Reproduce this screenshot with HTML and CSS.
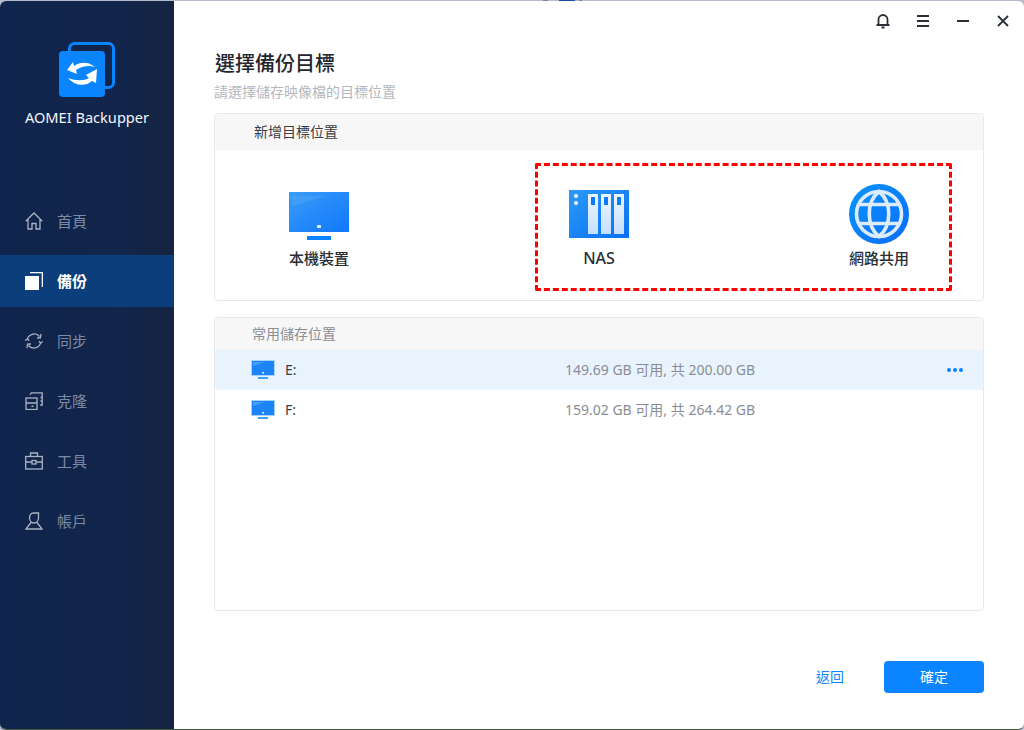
FILE: index.html
```html
<!DOCTYPE html>
<html lang="zh-Hant">
<head>
<meta charset="utf-8">
<title>AOMEI Backupper</title>
<link rel="stylesheet" href="styles.css">
</head>
<body>
<div class="window">
  <aside class="sidebar">
    <div class="brand">
      <svg class="logo" width="60" height="60" viewBox="0 0 60 60">
        <rect x="13.500" y="3.500" width="44" height="44" rx="5" fill="none" stroke="#0a84ff" stroke-width="3"/>
        <rect x="3" y="11" width="46" height="46" rx="4" fill="#0a84ff"/>
        <path d="M11 30 L17 22 L18 26 C25 21 33 22 39 27 C33 25 26 26 20 30 L21 34 Z" fill="#fff"/>
        <path d="M41 29 L40 43 L36 41 C29 47 19 46 12 38 C20 41 28 41 33 38 L30 35 Z" fill="#fff"/>
      </svg>
      <div class="brand-name">AOMEI Backupper</div>
    </div>
    <nav class="nav">
      <a class="nav-item">
        <svg class="nav-icon" viewBox="0 0 18 18"><path d="M.7 9.200 9 1l8.300 8.200M3 7.500V17h4v-5.500h4V17h4V7.500"/></svg>
        <span>首頁</span>
      </a>
      <a class="nav-item active">
        <svg class="nav-icon" viewBox="0 0 18 18"><rect x="0" y="4" width="14" height="14" fill="#fff" stroke="none"/><path d="M5 .6h12.400V15" stroke="#fff" stroke-width="1.400"/></svg>
        <span>備份</span>
      </a>
      <a class="nav-item">
        <svg class="nav-icon" viewBox="0 0 18 18"><path d="M2.200 8A7 7 0 0 1 14.500 4.500M15.800 10A7 7 0 0 1 3.500 13.500M12 6l3.400-.2L16 1.800M6 12l-3.400.2L2 16.200M.3 8.500l2-1.600 1.800 1.800M17.700 9.500l-2 1.600-1.800-1.800"/></svg>
        <span>同步</span>
      </a>
      <a class="nav-item">
        <svg class="nav-icon" viewBox="0 0 18 18"><rect x="1" y="6" width="11" height="11.500"/><path d="M1 11h11M5 2.500 6.500.8H17.200V13h-2M15.500 5.500h2M15.500 9h2"/><rect x="6.500" y="13.500" width="2" height="1.500" fill="#aab3c4" stroke="none"/></svg>
        <span>克隆</span>
      </a>
      <a class="nav-item">
        <svg class="nav-icon" viewBox="0 0 18 18"><rect x=".7" y="4.500" width="16.600" height="12.500"/><path d="M5.500 4.500V1h7v3.500M.7 10h6M11.300 10h6"/><rect x="7" y="8.500" width="4" height="3.500"/></svg>
        <span>工具</span>
      </a>
      <a class="nav-item">
        <svg class="nav-icon" viewBox="0 0 18 18"><path d="M13.500 1H8.500C5.500 1 4.500 3.500 4.500 6c0 3 2 5 4.500 5s4.500-2 4.500-5zM6 10.500 1 17h16l-5-6.500"/></svg>
        <span>帳戶</span>
      </a>
    </nav>
  </aside>

  <main class="main">
    <header class="topbar">
      <span class="top-btn"><svg viewBox="0 0 16 16" width="16" height="16"><path d="M3.500 12V6.500a4.500 4.500 0 0 1 9 0V12M1.500 12h13M6.500 14.500h3"/></svg></span>
      <span class="top-btn"><svg viewBox="0 0 16 16" width="16" height="16"><path d="M2 3h12M2 8h12M2 13h12"/></svg></span>
      <span class="top-btn"><svg viewBox="0 0 16 16" width="16" height="16"><path d="M2 8h12"/></svg></span>
      <span class="top-btn"><svg viewBox="0 0 16 16" width="16" height="16"><path d="M3 3l10 10M13 3 3 13"/></svg></span>
    </header>

    <div class="content">
      <h1 class="title">選擇備份目標</h1>
      <p class="subtitle">請選擇儲存映像檔的目標位置</p>

      <section class="card add-card">
        <div class="card-head head-dark">新增目標位置</div>
        <div class="targets">
          <div class="target">
            <svg width="60" height="60" viewBox="0 0 60 60">
              <defs><linearGradient id="scr" x1="0" y1="0" x2="1" y2="1"><stop offset="0" stop-color="#3a9cf8"/><stop offset="1" stop-color="#0f78fb"/></linearGradient></defs>
              <rect x="0" y="8" width="60" height="40" fill="url(#scr)"/>
              <path d="M3 12h34L3 22z" fill="#5db0f7" opacity=".35"/>
              <rect x="28" y="41" width="4" height="3" rx="1" fill="#e8f3ff"/>
              <rect x="18" y="52" width="24" height="4" fill="#0a84ff"/>
            </svg>
            <div class="target-name">本機裝置</div>
          </div>
          <div class="target">
            <svg width="60" height="60" viewBox="0 0 60 60">
              <defs>
                <linearGradient id="nas" x1="0" y1="0" x2="1" y2="1"><stop offset="0" stop-color="#2a9af8"/><stop offset="1" stop-color="#0a70f5"/></linearGradient>
                <linearGradient id="bay" x1="0" y1="0" x2="0" y2="1"><stop offset="0" stop-color="#eef6fd"/><stop offset="1" stop-color="#c5e0fb"/></linearGradient>
              </defs>
              <rect x="0" y="6" width="60" height="48" fill="url(#nas)"/>
              <circle cx="7" cy="12" r="2" fill="#fff"/><circle cx="7" cy="19" r="2" fill="#fff"/>
              <rect x="19" y="10" width="10" height="40" fill="url(#bay)"/><rect x="32" y="10" width="10" height="40" fill="url(#bay)"/><rect x="45" y="10" width="10" height="40" fill="url(#bay)"/>
              <rect x="22" y="13" width="4" height="8" fill="#0a7df5"/><rect x="35" y="13" width="4" height="8" fill="#0a7df5"/><rect x="48" y="13" width="4" height="8" fill="#0a7df5"/>
            </svg>
            <div class="target-name latin">NAS</div>
          </div>
          <div class="target">
            <svg width="60" height="60" viewBox="0 0 60 60">
              <defs><linearGradient id="glo" x1="0" y1="0" x2="1" y2="1"><stop offset="0" stop-color="#0a94fb"/><stop offset="1" stop-color="#0a6cf8"/></linearGradient></defs>
              <circle cx="30" cy="30" r="30" fill="url(#glo)"/>
              <g fill="none" stroke="#dcecfd" stroke-width="3.600">
                <circle cx="30" cy="30" r="22.500"/>
                <path d="M30 7.500C17 18 17 42 30 52.500C43 42 43 18 30 7.500z"/>
                <path d="M10 20.500h40M10 39.500h40"/>
              </g>
            </svg>
            <div class="target-name">網路共用</div>
          </div>
        </div>
        <div class="highlight"></div>
      </section>

      <section class="card list-card">
        <div class="card-head head-muted">常用儲存位置</div>
        <div class="row selected">
          <svg class="row-icon" width="24" height="20" viewBox="0 0 24 20"><rect x=".5" y=".5" width="23" height="15" fill="#1c84f8" stroke="#a6d2fb"/><path d="M2 2h12L2 6z" fill="#6bb6f9" opacity=".5"/><rect x="11" y="12" width="2" height="1.500" fill="#e8f3ff"/><rect x="7" y="17" width="10" height="2" fill="#3aa0f8"/></svg>
          <span class="row-name">E:</span>
          <span class="row-info">149.69 GB 可用, 共 200.00 GB</span>
          <span class="row-more"><i></i><i></i><i></i></span>
        </div>
        <div class="row">
          <svg class="row-icon" width="24" height="20" viewBox="0 0 24 20"><rect x=".5" y=".5" width="23" height="15" fill="#1c84f8" stroke="#a6d2fb"/><path d="M2 2h12L2 6z" fill="#6bb6f9" opacity=".5"/><rect x="11" y="12" width="2" height="1.500" fill="#e8f3ff"/><rect x="7" y="17" width="10" height="2" fill="#3aa0f8"/></svg>
          <span class="row-name">F:</span>
          <span class="row-info">159.02 GB 可用, 共 264.42 GB</span>
        </div>
      </section>

      <footer class="footer">
        <a class="btn-link">返回</a>
        <button class="btn-primary">確定</button>
      </footer>
    </div>
  </main>
</div>
</body>
</html>
```
FILE: styles.css
```css
* { box-sizing: border-box; }
html, body { margin: 0; height: 100%; }
body {
  background: linear-gradient(90deg, #b4bccd 0, #b4bccd 543px, #7b8496 543px, #7b8496 548px, #b4bccd 548px, #b4bccd 559px, #1a4fa0 559px, #1a4fa0 575px, #b4bccd 575px, #b4bccd 579px, #7b8496 579px, #7b8496 582px, #b4bccd 582px);
  font-family: "Noto Sans", "Noto Sans CJK TC", sans-serif;
  overflow: hidden;
}
.window {
  position: relative;
  margin-top: 1px;
  height: 729px;
  display: flex;
  background: #fff;
  border-radius: 6px;
  overflow: hidden;
  border-bottom: 1px solid #3f5a38;
}

/* sidebar */
.sidebar {
  width: 174px;
  flex: none;
  background: linear-gradient(90deg, #10254d 0, #12254b 70%, #152441 100%);
  display: flex;
  flex-direction: column;
}
.brand { height: 194px; display: flex; flex-direction: column; align-items: center; }
.logo { margin-top: 39px; margin-right: 2px; }
.brand-name { margin-top: 7px; font-size: 14.600px; line-height: 20px; color: #f2f5fa; white-space: nowrap; }
.nav { display: flex; flex-direction: column; gap: 8px; }
.nav-item {
  height: 52px;
  display: flex;
  align-items: center;
  gap: 14px;
  padding-left: 25px;
  font-size: 15px;
  color: #7d8aa3;
}
.nav-item span { margin-bottom: 2px; }
.nav-item.active { background: #0b3e7b; color: #fff; font-weight: 700; }
.nav-icon { width: 18px; height: 18px; flex: none; fill: none; stroke: #aab3c4; stroke-width: 1.300; }

/* main */
.main { flex: 1; min-width: 0; display: flex; flex-direction: column; }
.topbar { height: 40px; display: flex; justify-content: flex-end; padding-right: 1px; flex: none; }
.top-btn { width: 40px; display: flex; align-items: center; justify-content: center; }
.top-btn svg { fill: none; stroke: #2b2f38; stroke-width: 1.800; }
.content { flex: 1; padding: 9px 40px 0; display: flex; flex-direction: column; }
.title { margin: 0 0 0 1px; font-size: 20px; line-height: 28px; font-weight: 500; color: #23262d; }
.subtitle { margin: 4px 0 11px; font-size: 14px; line-height: 20px; color: #b3b7bf; }

.card { position: relative; background: #fff; border: 1px solid #e8e9ec; border-radius: 4px; overflow: hidden; }
.add-card { height: 188px; flex: none; overflow: visible; }
.list-card { height: 294px; flex: none; margin-top: 16px; }
.card-head { background: #f7f7f8; font-size: 14px; display: flex; align-items: center; padding-bottom: 2px; }
.add-card .card-head { height: 36px; padding-left: 39px; border-radius: 4px 4px 0 0; }
.list-card .card-head { height: 32px; padding-left: 37px; }
.head-dark { color: #3b3e45; }
.head-muted { color: #8b8e96; }

.targets { display: flex; justify-content: space-between; padding: 34px 44px 0 44px; }
.target { width: 120px; display: flex; flex-direction: column; align-items: center; }
.target-name { margin-top: 3px; font-size: 15px; line-height: 22px; font-weight: 500; color: #2a2d34; white-space: nowrap; }
.target-name.latin { font-size: 16px; }

.highlight {
  position: absolute;
  left: 320px;
  top: 49px;
  width: 417px;
  height: 128px;
  border: 3px dashed #ff0000;
  border-radius: 2px;
  pointer-events: none;
}

.row { height: 40px; display: flex; align-items: center; padding-left: 36px; font-size: 14px; position: relative; }
.row.selected { background: #e8f3fe; }
.row-icon { flex: none; }
.row-name { margin-left: 10px; margin-bottom: 2px; width: 280px; color: #3a3d44; }
.row-info { margin-bottom: 2px; color: #8a8d95; white-space: nowrap; }
.row-more { position: absolute; left: 732px; top: 18px; display: flex; gap: 2px; }
.row-more i { display: block; width: 4px; height: 4px; border-radius: 50%; background: #0a84ff; }

.footer { margin-top: 50px; display: flex; justify-content: flex-end; align-items: center; gap: 40px; }
.btn-link { font-size: 14px; color: #0a84ff; margin-bottom: 2px; }
.btn-primary {
  width: 100px;
  height: 32px;
  border: 0;
  border-radius: 4px;
  background: #0a84ff;
  color: #fff;
  font: inherit;
  font-size: 14px;
  padding: 0 0 2px;
}
```
